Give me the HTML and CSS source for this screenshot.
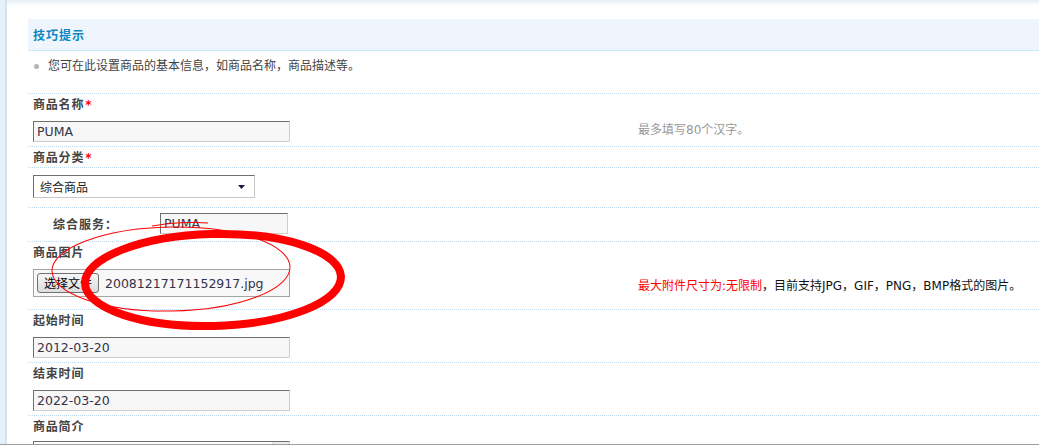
FILE: index.html
```html
<!DOCTYPE html>
<html lang="zh-CN">
<head>
<meta charset="utf-8">
<title>商品基本信息</title>
<link rel="stylesheet" href="styles.css">
</head>
<body>
<div class="page">
  <div class="sidebar"></div>
  <div class="main">
    <div class="tips">
      <div class="tips-head">技巧提示</div>
      <ul class="tips-list">
        <li>您可在此设置商品的基本信息，如商品名称，商品描述等。</li>
      </ul>
    </div>

    <div class="row">
      <div class="lbl">商品名称<span class="req">*</span></div>
      <div class="ctl"><div class="input">PUMA</div></div>
      <div class="hint">最多填写80个汉字。</div>
    </div>

    <div class="row">
      <div class="lbl">商品分类<span class="req">*</span></div>
    </div>

    <div class="row">
      <div class="ctl ctl-select">
        <div class="select">
          <span>综合商品</span>
          <svg class="arrow" width="7" height="4" viewBox="0 0 7 4"><path d="M0 0H7L3.5 4Z" fill="#1b1b4b"/></svg>
        </div>
      </div>
    </div>

    <div class="row">
      <div class="inline">
        <span class="inline-lbl">综合服务：</span>
        <div class="input input-small">PUMA</div>
      </div>
    </div>

    <div class="row">
      <div class="lbl">商品图片</div>
      <div class="ctl ctl-file">
        <div class="file">
          <button class="file-btn" type="button">选择文件</button>
          <span class="file-name">20081217171152917.jpg</span>
        </div>
      </div>
      <div class="hint hint-dark"><span class="red">最大附件尺寸为:无限制</span>，目前支持JPG，GIF，PNG，BMP格式的图片。</div>
    </div>

    <div class="row">
      <div class="lbl">起始时间</div>
      <div class="ctl"><div class="input">2012-03-20</div></div>
    </div>

    <div class="row">
      <div class="lbl">结束时间</div>
      <div class="ctl"><div class="input">2022-03-20</div></div>
    </div>

    <div class="row row-last">
      <div class="lbl">商品简介</div>
      <div class="ctl ctl-text">
        <div class="textarea"><div class="scroll"></div></div>
      </div>
    </div>
  </div>

  <svg class="marks" width="1039" height="446" viewBox="0 0 1039 446">
    <ellipse cx="171" cy="269" rx="119" ry="42" fill="none" stroke="#ff0000" stroke-width="1" transform="rotate(-1 171 269)"/>
    <path d="M152 226 Q180 221 208 223" fill="none" stroke="#ff0000" stroke-width="1"/>
    <ellipse cx="213" cy="280" rx="128" ry="46" fill="none" stroke="#ff0000" stroke-width="8" transform="rotate(-1.5 213 280)"/>
  </svg>
</div>
</body>
</html>
```

FILE: styles.css
```css
* { box-sizing: border-box; }

html, body {
  margin: 0;
  padding: 0;
  background: #fff;
}

body {
  font-family: "DejaVu Sans", "Noto Sans CJK SC", sans-serif;
  font-size: 12px;
  color: #444;
}

.page {
  position: relative;
  display: flex;
  width: 1039px;
  height: 445px;
  overflow: hidden;
  border-bottom: 1px solid #a39e95;
}

.sidebar {
  width: 7px;
  flex: none;
  background: #e6f0f9;
  border-right: 2px solid #d2e4f4;
}

.main {
  flex: 1;
  padding: 19px 0 0 21px;
  background: linear-gradient(to bottom, #e8eef4 0, #ffffff 6px);
}

/* tips */
.tips-head {
  height: 32px;
  line-height: 31px;
  padding-left: 5px;
  background: #eef5fc;
  border-bottom: 1px dotted #bcd9ee;
  color: #0b87c3;
  font-weight: bold;
  letter-spacing: 1px;
  font-family: "Noto Sans CJK SC", sans-serif;
}

.tips-list {
  list-style: none;
  margin: 0;
  padding: 5px 5px 17px 6px;
  border-bottom: 1px dotted #bcd9ee;
}

.tips-list li {
  display: flex;
  align-items: center;
  line-height: 20px;
  color: #444;
}

.tips-list li::before {
  content: "";
  width: 5px;
  height: 5px;
  border-radius: 50%;
  background: #b4b4b4;
  margin-right: 9px;
  flex: none;
}

/* rows */
.row {
  display: grid;
  grid-template-columns: 605px 1fr;
  border-bottom: 1px dotted #bcd9ee;
}

.row-last { border-bottom: none; }

.lbl {
  grid-column: 1;
  padding-left: 5px;
  line-height: 20px;
  height: 20px;
  font-weight: bold;
  color: #444;
  letter-spacing: 0.8px;
  font-family: "Noto Sans CJK SC", sans-serif;
}

.req {
  color: #ff0000;
  font-family: "DejaVu Sans", sans-serif;
  font-weight: bold;
  margin-left: 1px;
}

.ctl {
  grid-column: 1;
  padding: 7px 0 4px 5px;
}

.ctl-select { padding: 7px 0 9px 5px; }
.ctl-file { padding: 7px 0 12px 5px; }
.ctl-text { padding: 5px 0 0 5px; }

.hint {
  grid-column: 2;
  grid-row: 2;
  align-self: center;
  padding-left: 5px;
  color: #999;
  line-height: 16px;
  white-space: nowrap;
}

.hint-dark { color: #111; }
.red { color: #ff0000; }

/* inputs */
.input {
  width: 257px;
  height: 21px;
  line-height: 19px;
  padding-left: 3px;
  background: #f7f7f7;
  border: 1px solid;
  border-color: #6f6f6f #cdcdcd #cdcdcd #6f6f6f;
  color: #33334a;
  font-size: 12.5px;
}

.input-small {
  width: 128px;
}

.select {
  display: flex;
  align-items: center;
  justify-content: space-between;
  width: 222px;
  height: 23px;
  padding: 0 9px 0 6px;
  background: #fff;
  border: 1px solid;
  border-color: #6f6f6f #c8c8c8 #c8c8c8 #6f6f6f;
  color: #222;
  font-family: "Noto Sans CJK SC", sans-serif;
}

.arrow { display: block; margin-top: 1px; }

.inline {
  grid-column: 1;
  display: flex;
  align-items: center;
  padding: 5px 0 7px 25px;
}

.inline-lbl {
  width: 107px;
  font-weight: bold;
  letter-spacing: 1px;
  color: #444;
  font-family: "Noto Sans CJK SC", sans-serif;
}

.file {
  display: flex;
  align-items: center;
  width: 257px;
  height: 28px;
  padding-left: 3px;
  background: #f8f8f8;
  border: 1px solid #a4a4a4;
}

.file-btn {
  width: 62px;
  height: 20px;
  padding: 0;
  margin: 0 6px 0 0;
  border: 1px solid #707070;
  border-radius: 3px;
  background: linear-gradient(to bottom, #f6f6f6, #dcdcdc);
  font-family: "Noto Sans CJK SC", sans-serif;
  font-size: 12px;
  color: #000;
  line-height: 18px;
}

.file-name {
  color: #33334a;
  font-size: 12.5px;
}

.textarea {
  position: relative;
  width: 257px;
  height: 60px;
  border: 1px solid;
  border-color: #6f6f6f #cdcdcd #cdcdcd #6f6f6f;
  background: #fff;
  display: flex;
  justify-content: flex-end;
}

.scroll {
  width: 17px;
  height: 100%;
  background: #ececec;
  border-left: 1px solid #dcdcdc;
}

/* hand-drawn annotation over the form */
.marks {
  position: absolute;
  top: 0;
  left: 0;
  pointer-events: none;
}
```
